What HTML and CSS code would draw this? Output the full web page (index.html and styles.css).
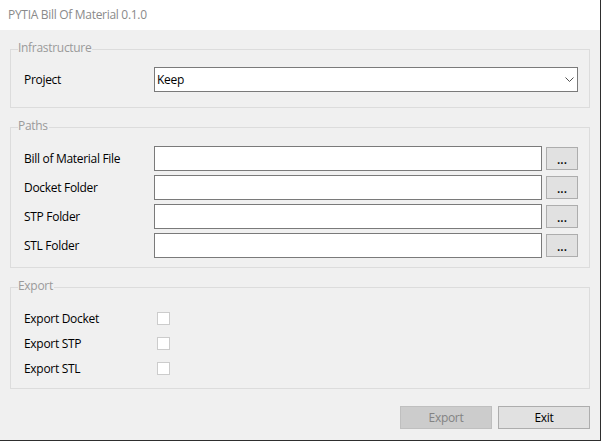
FILE: index.html
```html
<!DOCTYPE html>
<html>
<head>
<meta charset="utf-8">
<title>PYTIA Bill Of Material 0.1.0</title>
<link rel="stylesheet" href="styles.css">
</head>
<body>
<div class="window">
  <div class="titlebar">PYTIA Bill Of Material 0.1.0</div>
  <div class="content">
    <fieldset class="group group-infra">
      <legend>Infrastructure</legend>
      <div class="row">
        <span class="lbl">Project</span>
        <div class="combo">
          <span class="combo-value">Keep</span>
          <svg class="chevron" width="9" height="5" viewBox="0 0 9 5"><polyline points="0.5,0.5 4.5,4.5 8.5,0.5" fill="none" stroke="#505050" stroke-width="1"/></svg>
        </div>
      </div>
    </fieldset>

    <fieldset class="group group-paths">
      <legend>Paths</legend>
      <div class="row">
        <span class="lbl">Bill of Material File</span>
        <div class="textbox"></div>
        <button class="browse">...</button>
      </div>
      <div class="row">
        <span class="lbl">Docket Folder</span>
        <div class="textbox"></div>
        <button class="browse">...</button>
      </div>
      <div class="row">
        <span class="lbl">STP Folder</span>
        <div class="textbox"></div>
        <button class="browse">...</button>
      </div>
      <div class="row">
        <span class="lbl">STL Folder</span>
        <div class="textbox"></div>
        <button class="browse">...</button>
      </div>
    </fieldset>

    <fieldset class="group group-export">
      <legend>Export</legend>
      <div class="check-row">
        <span class="lbl">Export Docket</span>
        <span class="checkbox"></span>
      </div>
      <div class="check-row">
        <span class="lbl">Export STP</span>
        <span class="checkbox"></span>
      </div>
      <div class="check-row">
        <span class="lbl">Export STL</span>
        <span class="checkbox"></span>
      </div>
    </fieldset>

    <div class="actions">
      <button class="btn btn-disabled">Export</button>
      <button class="btn">Exit</button>
    </div>
  </div>
</div>
</body>
</html>
```

FILE: styles.css
```css
* {
  box-sizing: border-box;
}

html, body {
  margin: 0;
  padding: 0;
  background: #f0f0f0;
}

body {
  font-family: "Open Sans", "Noto Sans", sans-serif;
  font-size: 12px;
  letter-spacing: -0.3px;
  color: #000;
}

.window {
  width: 601px;
  height: 441px;
  border-right: 1px solid #2e2e2e;
  border-bottom: 1px solid #2e2e2e;
  background: #f0f0f0;
  display: flex;
  flex-direction: column;
}

.titlebar {
  height: 30px;
  background: #ffffff;
  color: #8a8a8a;
  font-size: 12px;
  line-height: 30px;
  padding-left: 8px;
  flex: none;
}

.content {
  flex: 1;
  padding: 11px 10px 0 10px;
  display: flex;
  flex-direction: column;
}

.group {
  margin: 0 0 11px 0;
  border: 1px solid #dcdcdc;
  padding: 0 11px 0 13px;
  min-width: 0;
}

.group legend {
  margin-left: -6px;
  padding: 0 1px 4px 0;
  font-size: 12px;
  line-height: 13px;
  color: #9a9a9a;
}

.group-infra {
  padding-top: 9px;
  padding-bottom: 15px;
}

.group-paths {
  padding-top: 10px;
  padding-bottom: 9px;
  display: flex;
  flex-direction: column;
  gap: 4px;
}

.group-export {
  padding-top: 10px;
  padding-bottom: 7px;
}

.row {
  display: flex;
  align-items: center;
  height: 25px;
}

.lbl {
  width: 130px;
  flex: none;
  line-height: 16px;
}

.combo {
  flex: 1;
  height: 25px;
  border: 1px solid #7a7a7a;
  background: #fff;
  display: flex;
  align-items: center;
  justify-content: space-between;
  padding: 0 3px 0 2px;
}

.combo-value {
  line-height: 16px;
}

.chevron {
  display: block;
}

.textbox {
  flex: 1;
  height: 25px;
  border: 1px solid #7a7a7a;
  background: #fff;
}

.browse {
  flex: none;
  width: 32px;
  height: 23px;
  margin-left: 4px;
  border: 1px solid #adadad;
  background: #e1e1e1;
  font-family: inherit;
  font-size: 12px;
  letter-spacing: 0;
  font-weight: 600;
  line-height: 14px;
  padding: 2px 0 0 0;
  color: #000;
}

.check-row {
  display: flex;
  align-items: center;
  height: 25px;
}

.checkbox {
  display: block;
  width: 13px;
  height: 13px;
  margin-left: 3px;
  border: 1px solid #cccccc;
  background: #fff;
}

.actions {
  margin-top: 6px;
  display: flex;
  justify-content: flex-end;
  gap: 6px;
}

.btn {
  width: 92px;
  height: 23px;
  border: 1px solid #adadad;
  background: #e1e1e1;
  font-family: inherit;
  font-size: 12px;
  letter-spacing: inherit;
  line-height: 16px;
  padding: 0;
  color: #000;
}

.btn-disabled {
  background: #cccccc;
  border-color: #bfbfbf;
  color: #838383;
}
```
